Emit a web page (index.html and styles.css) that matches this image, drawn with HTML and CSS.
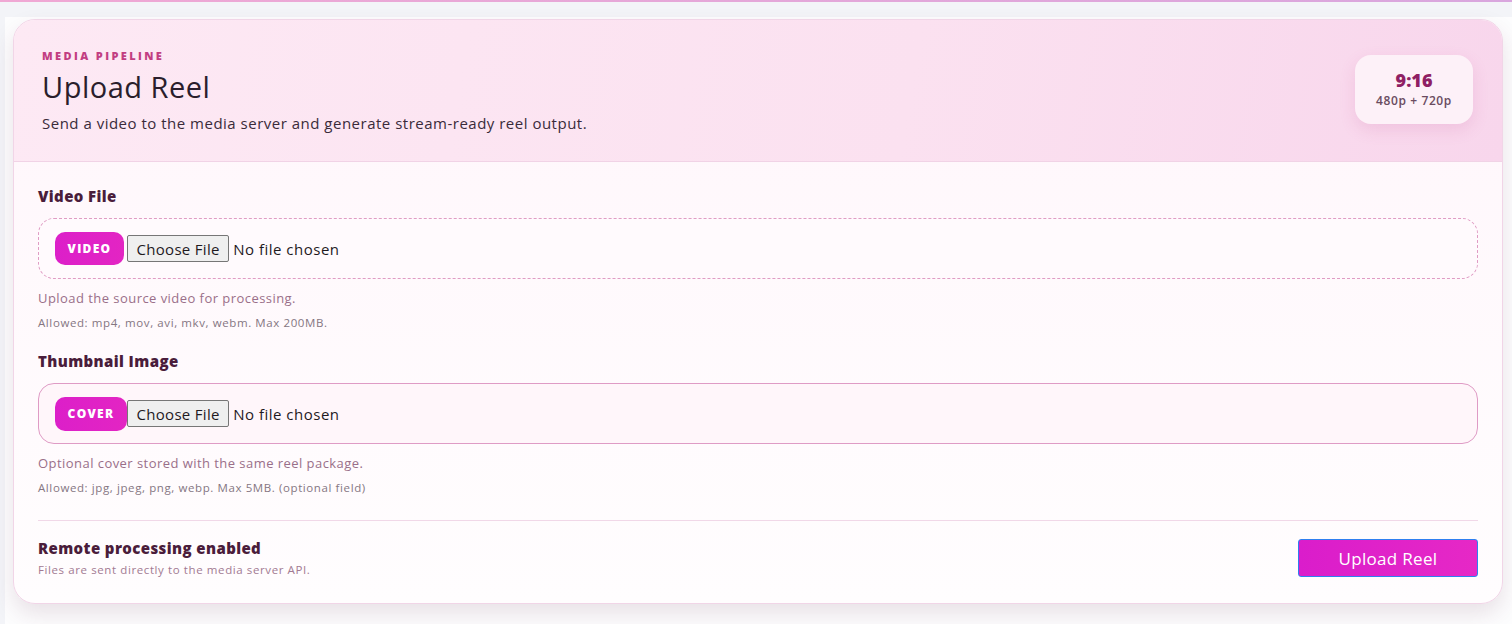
FILE: index.html
```html
<!DOCTYPE html>
<html lang="en">
<head>
<meta charset="utf-8">
<title>Upload Reel</title>
<link rel="stylesheet" href="styles.css">
</head>
<body>
<div class="topline"></div>
<main class="page">
  <section class="card">
    <header class="card-head">
      <div class="head-text">
        <div class="eyebrow">MEDIA PIPELINE</div>
        <h1 class="title">Upload Reel</h1>
        <p class="subtitle">Send a video to the media server and generate stream-ready reel output.</p>
      </div>
      <div class="ratio">
        <div class="ratio-main">9:16</div>
        <div class="ratio-sub">480p + 720p</div>
      </div>
    </header>
    <form class="card-body">
      <div class="field">
        <label class="field-label">Video File</label>
        <div class="drop drop-dashed">
          <span class="pill">VIDEO</span>
          <input class="file" type="file">
        </div>
        <p class="hint">Upload the source video for processing.</p>
        <p class="allowed">Allowed: mp4, mov, avi, mkv, webm. Max 200MB.</p>
      </div>
      <div class="field">
        <label class="field-label">Thumbnail Image</label>
        <div class="drop drop-solid">
          <span class="pill pill-cover">COVER</span>
          <input class="file" type="file">
        </div>
        <p class="hint">Optional cover stored with the same reel package.</p>
        <p class="allowed">Allowed: jpg, jpeg, png, webp. Max 5MB. (optional field)</p>
      </div>
      <div class="footer">
        <div class="footer-text">
          <div class="footer-title">Remote processing enabled</div>
          <div class="footer-sub">Files are sent directly to the media server API.</div>
        </div>
        <button class="submit" type="button">Upload Reel</button>
      </div>
    </form>
  </section>
</main>
</body>
</html>
```

FILE: styles.css
```css
* { box-sizing: border-box; }
html, body { margin: 0; padding: 0; }
body {
  background: #f3f4f8;
  font-family: "Open Sans", "Liberation Sans", sans-serif;
  color: #2b1f2e;
  height: 624px;
  overflow: hidden;
}
.topline {
  height: 2px;
  background: linear-gradient(90deg, #f0a8d4, #d9a6de);
}
.page {
  margin: 15px 0 0 5px;
  background: #fdfdfe;
  padding: 2px 9px 40px 8px;
  min-height: 620px;
}
.card {
  border: 1px solid #f1d5e7;
  border-radius: 22px;
  overflow: hidden;
  background: linear-gradient(180deg, #fff6fb 0%, #fffdfe 100%);
  box-shadow: 0 10px 22px rgba(90, 40, 70, 0.13);
}
.card-head {
  display: flex;
  justify-content: space-between;
  align-items: center;
  padding: 25px 29px 25px 28px;
  background: linear-gradient(100deg, #fde9f4 0%, #fbe1f0 60%, #f8d6ec 100%);
  border-bottom: 1px solid #f1d3e6;
  height: 142px;
}
.eyebrow {
  font-size: 11px;
  font-weight: 800;
  letter-spacing: 2.4px;
  color: #c23e82;
  line-height: 14px;
}
.title {
  margin: 7px 0 0;
  font-size: 29px;
  font-weight: 400;
  letter-spacing: 0.5px;
  line-height: 34px;
  color: #2a1e2c;
}
.subtitle {
  margin: 9px 0 0;
  font-size: 15px;
  letter-spacing: 0.5px;
  line-height: 20px;
  color: #3a2b3a;
}
.ratio {
  width: 118px;
  height: 69px;
  border-radius: 16px;
  background: #fdf1f8;
  box-shadow: 0 6px 16px rgba(200, 90, 150, 0.16);
  display: flex;
  flex-direction: column;
  align-items: center;
  justify-content: center;
  margin-top: -3px;
}
.ratio-main {
  font-size: 18px;
  font-weight: 800;
  color: #8f1f64;
  line-height: 22px;
}
.ratio-sub {
  font-size: 12px;
  font-weight: 600;
  letter-spacing: 0.6px;
  color: #6a4b60;
  line-height: 16px;
  margin-top: 2px;
}
.card-body {
  padding: 24px 24px 26px 24px;
  display: flex;
  flex-direction: column;
}
.field { display: flex; flex-direction: column; margin-bottom: 21px; }
.field-label {
  font-size: 15px;
  font-weight: 800;
  letter-spacing: 0.4px;
  color: #4a1d3b;
  line-height: 20px;
  margin-bottom: 12px;
}
.drop {
  display: flex;
  align-items: center;
  height: 61px;
  padding: 0 16px;
  border-radius: 16px;
}
.drop-dashed {
  border: 1px dashed #e09cc4;
  background: #fffafd;
}
.drop-solid {
  border: 1px solid #df9bc5;
  background: #fff6fa;
}
.pill {
  display: inline-flex;
  align-items: center;
  justify-content: center;
  width: 69px;
  height: 33px;
  border-radius: 10px;
  background: linear-gradient(90deg, #dc1fc9, #e325c3);
  color: #ffffff;
  font-size: 12px;
  font-weight: 800;
  letter-spacing: 1.3px;
  margin-right: 3px;
}
.pill-cover { width: 72px; height: 34px; margin-right: 0; }
.file {
  font-family: "Open Sans", "Liberation Sans", sans-serif;
  font-size: 15px;
  letter-spacing: 0.5px;
  color: #1f1a1f;
}
.file::file-selector-button {
  font-family: "Open Sans", "Liberation Sans", sans-serif;
  font-size: 15px;
  letter-spacing: 0.3px;
  height: 27px;
  padding: 0 8.5px;
  margin-right: 4px;
  background: #efefef;
  border: 1px solid #767676;
  border-radius: 2px;
  color: #1f1a1f;
}
.hint {
  margin: 10px 0 0;
  font-size: 13px;
  letter-spacing: 0.45px;
  line-height: 18px;
  color: #9a6f89;
}
.allowed {
  margin: 8px 0 0;
  font-size: 11.5px;
  letter-spacing: 0.6px;
  line-height: 15px;
  color: #857682;
}
.footer {
  display: flex;
  justify-content: space-between;
  align-items: center;
  border-top: 1px solid #f1d8e8;
  padding-top: 16px;
  margin-top: 4px;
}
.footer-title {
  font-size: 15px;
  font-weight: 800;
  letter-spacing: 0.4px;
  color: #4a1d3b;
  line-height: 20px;
}
.footer-sub {
  font-size: 11.5px;
  letter-spacing: 0.6px;
  color: #a27a92;
  line-height: 15px;
  margin-top: 4px;
}
.submit {
  width: 180px;
  height: 38px;
  border: 1px solid #2f7ff0;
  border-radius: 3px;
  background: linear-gradient(90deg, #da1dcb, #e628c6);
  color: #ffffff;
  font-family: "Open Sans", "Liberation Sans", sans-serif;
  font-size: 17px;
  letter-spacing: 0.3px;
  font-weight: 400;
  margin-top: 2px;
}
```
